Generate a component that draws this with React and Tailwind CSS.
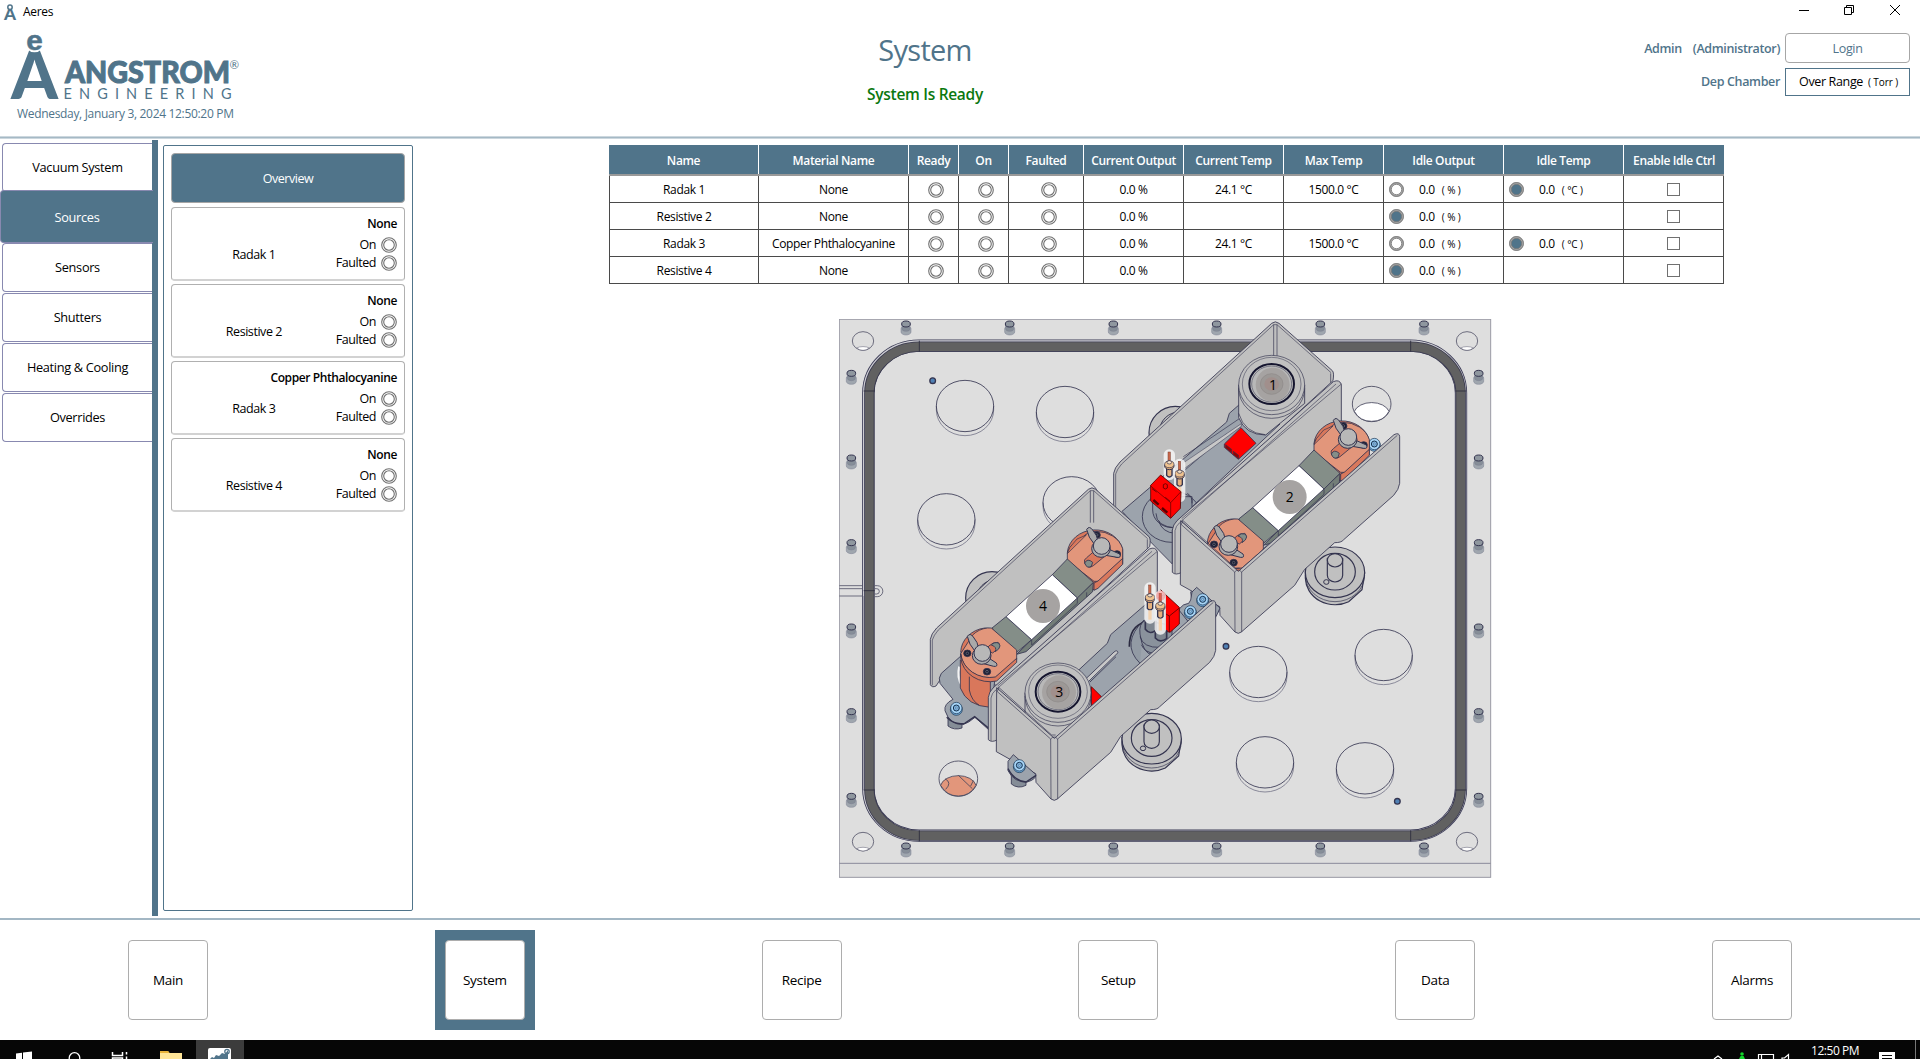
import React from "react";

const EDGE = "#34344f";
const WALL = "#c0c0c0";
const STEEL = "#9ca3ac";

/* ---------- small shared pieces ---------- */

function Lamp() {
  return (
    <svg width="16" height="16" viewBox="0 0 16 16" className="shrink-0">
      <circle cx="8" cy="8" r="7.3" fill="#fff" stroke="#707070" strokeWidth="1.1" />
      <circle cx="8" cy="8" r="5.3" fill="#fff" stroke="#707070" strokeWidth="1.1" />
    </svg>
  );
}

function Radio({ on }) {
  return (
    <svg width="15" height="15" viewBox="0 0 15 15" className="shrink-0">
      <circle cx="7.5" cy="7.5" r="6.3" fill={on ? "#50748a" : "#fff"} stroke="#a8a8a8" strokeWidth="2.2" />
      <circle cx="7.5" cy="7.5" r="6.9" fill="none" stroke="#777" strokeWidth="0.9" />
      <circle cx="7.5" cy="7.5" r="5.2" fill="none" stroke="#777" strokeWidth="0.8" />
    </svg>
  );
}

/* ---------- header ---------- */

function Logo() {
  return (
    <svg width="232" height="72" viewBox="8 32 232 72" className="block overflow-visible" fill="#50748a">
      <text x="11" y="99" fontFamily="Lato" fontWeight="900" fontSize="67" textLength="47" lengthAdjust="spacingAndGlyphs">A</text>
      <circle cx="34.5" cy="42" r="10.3" fill="#fff" />
      <text x="26.2" y="50" fontFamily="Liberation Sans" fontWeight="700" fontSize="28" textLength="16.5" lengthAdjust="spacingAndGlyphs" stroke="#50748a" strokeWidth="0.5">e</text>
      <text x="65" y="82.5" fontFamily="Lato" fontWeight="900" fontSize="29.5" textLength="165" lengthAdjust="spacingAndGlyphs" stroke="#50748a" strokeWidth="1">ANGSTROM</text>
      <text x="229.5" y="69" fontFamily="Lato" fontSize="11.5">®</text>
      <text x="63.5" y="98.8" fontFamily="Lato" fontWeight="400" fontSize="14.5" textLength="168">ENGINEERING</text>
    </svg>
  );
}

function TitleBar() {
  return (
    <div className="flex h-[24px] items-center pl-[4px] pr-[19px]">
      <svg width="12" height="17" viewBox="0 0 12 17" fill="#50748a" className="overflow-visible">
        <text x="0" y="16" fontFamily="Lato" fontWeight="900" fontSize="17" textLength="12" lengthAdjust="spacingAndGlyphs">A</text>
        <circle cx="6" cy="3.2" r="2.2" fill="#fff" stroke="#50748a" strokeWidth="1.5" />
      </svg>
      <span className="ml-[7px] text-[12px] leading-none tracking-[-0.3px]">Aeres</span>
      <svg width="102" height="12" viewBox="0 0 102 12" className="ml-auto mb-[4px]" fill="none" stroke="#000" strokeWidth="1">
        <path d="M0 6.5H10" />
        <path d="M45.5 3.5h7v7h-7zM47.5 3.5v-2h7v7h-2" />
        <path d="M91 1l10 10M101 1L91 11" />
      </svg>
    </div>
  );
}

function Header() {
  return (
    <div className="grid h-[112px] grid-cols-3 text-[#50748a]">
      <div className="pl-[8px] pt-[8px]">
        <Logo />
        <div className="pl-[9px] pt-[2px] text-[12px] leading-[16px] tracking-[-0.32px] whitespace-nowrap">
          Wednesday, January 3, 2024 12:50:20 PM
        </div>
      </div>
      <div className="-ml-[70px] flex flex-col items-center pt-[8px]">
        <div className="text-[29px] leading-[36px] tracking-[-0.7px]">System</div>
        <div className="mt-[17px] text-[15.5px] font-semibold leading-[18px] tracking-[-0.3px] text-[#0b780f]">System Is Ready</div>
      </div>
      <div className="flex flex-col items-end gap-[5px] pr-[10px] pt-[9px] text-[12.5px] tracking-[-0.35px]">
        <div className="flex items-center gap-[5px]">
          <span className="mr-[6px] pt-[2px] font-semibold">Admin</span>
          <span className="pt-[2px] font-semibold">(Administrator)</span>
          <div className="flex h-[30px] w-[125px] items-center justify-center rounded-[4px] border border-[#a6a6a6] pt-[2px]">Login</div>
        </div>
        <div className="flex items-center gap-[5px]">
          <span className="pt-[1px] font-semibold">Dep Chamber</span>
          <div className="flex h-[28px] w-[125px] items-center justify-end gap-[5px] border border-[#50748a] pr-[11px] pt-[1px] text-black">
            <span>Over Range</span>
            <span className="text-[10px] tracking-[-0.1px]">( Torr )</span>
          </div>
        </div>
      </div>
    </div>
  );
}

/* ---------- left navigation ---------- */

function Tab({ label, active }) {
  if (active) {
    return (
      <div className="z-10 -mb-[1px] -mt-[2px] flex h-[53px] w-[153px] items-center justify-center rounded-l-[4px] border border-r-0 border-[#8889b0] bg-[#50748a] pt-[2px] text-white">
        {label}
      </div>
    );
  }
  return (
    <div className="ml-[2px] mt-[0.5px] flex h-[49.5px] w-[150px] items-center justify-center rounded-l-[4px] border border-r-0 border-[#8889b0] pt-[1px]">
      {label}
    </div>
  );
}

function SideTabs() {
  return (
    <div className="mt-[1px] flex h-[776px] w-[158px] border-r-[6px] border-[#50748a] text-[12.75px] tracking-[-0.32px]">
      <div className="flex w-[152px] flex-col pt-[2px]">
        <Tab label="Vacuum System" />
        <Tab label="Sources" active />
        <Tab label="Sensors" />
        <Tab label="Shutters" />
        <Tab label="Heating & Cooling" />
        <Tab label="Overrides" />
      </div>
    </div>
  );
}

const SOURCES = [
  { name: "Radak 1", material: "None", temp: true },
  { name: "Resistive 2", material: "None", temp: false },
  { name: "Radak 3", material: "Copper Phthalocyanine", temp: true },
  { name: "Resistive 4", material: "None", temp: false },
];

function SourceCard({ source }) {
  return (
    <div className="flex h-[74px] flex-col items-end rounded-[4px] border border-b-2 border-[#b0b0b0] border-b-[#d2d2d2] pr-[7px] pt-[6px]">
      <div className="text-[12px] font-semibold leading-[20px] tracking-[-0.4px] text-black">{source.material}</div>
      <div className="flex w-full items-center">
        <div className="w-[164px] pt-[5px] text-center">{source.name}</div>
        <div className="ml-auto flex flex-col items-end pt-[2px]">
          <div className="flex h-[18px] items-center gap-[5px]">On<Lamp /></div>
          <div className="flex h-[18px] items-center gap-[5px]">Faulted<Lamp /></div>
        </div>
      </div>
    </div>
  );
}

function SourcePanel() {
  return (
    <div className="ml-[5px] mt-[6px] flex h-[766px] w-[250px] flex-col gap-[3px] rounded-[2px] border border-[#50748a] px-[7px] pt-[7px] text-[12.5px] tracking-[-0.45px]">
      <div className="mb-[1px] flex h-[50px] items-center justify-center rounded-[4px] border border-[#a6a6a6] bg-[#50748a] pt-[2px] text-white">Overview</div>
      {SOURCES.map((s) => (
        <SourceCard key={s.name} source={s} />
      ))}
    </div>
  );
}

/* ---------- status table ---------- */

const GRID = "grid grid-cols-[150px_150px_50px_50px_75px_100px_100px_100px_120px_120px_100px]";
const COLS = ["Name", "Material Name", "Ready", "On", "Faulted", "Current Output", "Current Temp", "Max Temp", "Idle Output", "Idle Temp", "Enable Idle Ctrl"];

function Cell({ children }) {
  return <div className="flex items-center justify-center border-b border-r border-[#4a4a4a] pt-[1px] first:border-l">{children}</div>;
}

function LampCell() {
  return (
    <div className="flex items-center justify-center border-b border-r border-[#4a4a4a] pl-[5px] pt-[1px]">
      <Lamp />
    </div>
  );
}

function IdleCell({ on, unit }) {
  return (
    <div className="flex items-center border-b border-r border-[#4a4a4a] pl-[5px] pt-[1px]">
      <Radio on={on} />
      <span className="ml-[15px]">0.0</span>
      <span className="ml-[7px] pt-[1px] text-[10px] tracking-[-0.1px]">{unit}</span>
    </div>
  );
}

function StatusTable() {
  return (
    <div className="w-[1115px] text-[12px] tracking-[-0.35px]">
      <div className={GRID + " h-[31px] border-b-2 border-[#999] bg-[#50748a] font-semibold text-white"}>
        {COLS.map((c) => (
          <div key={c} className="flex items-center justify-center whitespace-nowrap border-r border-white pt-[2px] last:border-r-0">{c}</div>
        ))}
      </div>
      {SOURCES.map((s) => (
        <div key={s.name} className={GRID + " h-[27px]"}>
          <Cell>{s.name}</Cell>
          <Cell>{s.material}</Cell>
          <LampCell />
          <LampCell />
          <LampCell />
          <Cell>0.0 %</Cell>
          <Cell>{s.temp ? "24.1 °C" : ""}</Cell>
          <Cell>{s.temp ? "1500.0 °C" : ""}</Cell>
          <IdleCell on={!s.temp} unit="( % )" />
          {s.temp ? <IdleCell on unit="( °C )" /> : <Cell />}
          <Cell><div className="h-[13px] w-[13px] border border-[#707070]" /></Cell>
        </div>
      ))}
    </div>
  );
}

/* ---------- chamber drawing (3 units per pixel) ---------- */

const at = (x, y) => `translate(${x} ${y})`;

function Pin({ x, y }) {
  return (
    <g transform={at(x, y)} stroke="#7b7f90" strokeWidth="1.5">
      <path d="M-15 24v10a15 9 0 0 0 30 0v-10a15 9 0 0 0 -30 0z" fill="#9fa6ae" />
      <path d="M-12 10v14a12 8 0 0 0 24 0v-14z" fill="#868e98" />
      <ellipse cx="0" cy="10" rx="13" ry="9" fill="#8f979f" stroke={EDGE} strokeWidth="3" />
    </g>
  );
}

function CornerHole({ x, y }) {
  return (
    <g transform={at(x, y)} stroke="#55556a" strokeWidth="2.5">
      <ellipse cx="0" cy="0" rx="32" ry="28" fill="#dedede" />
      <path d="M-19 21a25 12 0 0 1 38 0q-19 14-38 0z" fill="#fff" strokeWidth="1.5" />
    </g>
  );
}

function Port({ x, y }) {
  return (
    <g transform={at(x, y)} fill="none">
      <path d="M-86 0v12a86 77 0 0 0 172 0v-12" stroke="#77778a" strokeWidth="2.5" />
      <ellipse rx="86" ry="77" stroke={EDGE} strokeWidth="2.5" />
    </g>
  );
}

function Dot({ x, y }) {
  return <circle cx={x} cy={y} r="8.5" fill="#4f80b4" stroke={EDGE} strokeWidth="4" />;
}

function Knob({ x, y }) {
  return (
    <g transform={at(x, y)} stroke={EDGE} strokeWidth="3.5" fill={WALL}>
      <path d="M-89 -8v22a89 82 0 0 0 130 70l40-36 8-50z" />
      <ellipse cx="0" cy="-4" rx="89" ry="76" />
      <path d="M-89 4a89 80 0 0 0 178 0" fill="none" strokeWidth="2" />
      <ellipse cx="0" cy="-6" rx="61" ry="55" />
      <path d="M-23 -45v50a23 20 0 0 0 46 0v-50z" />
      <ellipse cx="0" cy="-40" rx="23" ry="20" />
      <ellipse cx="-26" cy="25" rx="8" ry="7" strokeWidth="3" />
    </g>
  );
}

function Screw({ x, y }) {
  return (
    <g transform={at(x, y)} stroke="#16324f">
      <ellipse cx="0" cy="4" rx="18" ry="18" fill="#6fa8d6" strokeWidth="2" />
      <circle r="17" fill="#a6d4f6" strokeWidth="2" />
      <circle r="9" fill="#7fb4e0" strokeWidth="3" />
      <circle r="3" fill="#a6d4f6" strokeWidth="1" />
    </g>
  );
}

function BlackScrew({ x, y }) {
  return (
    <g transform={at(x, y)}>
      <ellipse rx="11" ry="10" fill="#1d1f33" />
      <circle r="4" fill="none" stroke="#6d7080" strokeWidth="2" />
    </g>
  );
}

function WingNut({ x, y, foot }) {
  return (
    <g transform={at(x, y)} stroke={EDGE} strokeWidth="3" fill="#a9a9a9">
      <path d="M-45 -52q8-12 18 2q14 16 16 34l-10 10q-20-22-24-46z" />
      <path d={foot ? "M14 10l28 18q6 12-8 10l-30-8z" : "M18 6l36 16q6 12-8 10l-34-6z"} />
      <ellipse cx="-2" cy="6" rx="28" ry="26" />
      <circle cx="0" cy="-2" r="25" fill="#b8b8b8" />
    </g>
  );
}

/* resistive boat: two copper clamps with a heater strip between them */
function Boat({ n }) {
  return (
    <g stroke={EDGE} strokeWidth="2.5" strokeLinejoin="round">
      {/* upper clamp */}
      <path d="M642 400a84 74 0 0 1 166 -8v42l-75 72-30 14z" fill="#d9785c" />
      <path d="M642 404q4-22 22-28l34-30q14-10 30-9a82 70 0 0 1 80 52v30l-72 68h-14l-80-62z" fill="#e2967b" />
      <path d="M642 404l57-56-28 12-22 26z" fill="#d9785c" strokeWidth="2" />
      <path d="M722 492v22l12-6 74-72v-18l-74 68z" fill="#d9785c" />
      <path d="M694 432q-4-10 6-16l28-24 26 20-34 28q-16 12-26-8z" fill="#d9785c" />
      <path d="M694 432q8-16 24-2l-4 12q-14 8-20-10z" fill="#848e88" />
      <BlackScrew x={730} y={348} />
      <BlackScrew x={791} y={405} />
      <WingNut x={745} y={383} />
      {/* strip */}
      <path d="M720 490l-2 28-200 180-28 8 45-44z" fill="#737d78" />
      <path d="M642 420l78 70-48 47-75-70z" fill="#848e88" />
      <path d="M458 593l77 69-47 40-73-74z" fill="#848e88" />
      <path d="M597 467l75 70-137 125-77-69z" fill="#fff" />
      <path d="M672 537v16l-137 125v-16M700 520v14" fill="none" strokeWidth="2" />
      {/* lower clamp */}
      <path d="M322 700a84 76 0 0 1 72-73l24 2v60z" fill="#d9785c" />
      <path d="M322 704l36-56q18-18 44-21h12l76 66v28l-64 54a88 80 0 0 1-104-71z" fill="#e2967b" />
      <path d="M322 704v12a88 80 0 0 0 108 70l60-56v-12l-64 56a88 80 0 0 1-104-70z" fill="#d9785c" />
      <path d="M398 692q6-12 22-20l14-2q10 10-2 20l-14 12z" fill="#d9785c" />
      <path d="M414 678q8-10 22-6 8 8 0 18l-10 8q6-14-12-20z" fill="#848e88" />
      <BlackScrew x={342} y={703} />
      <BlackScrew x={401} y={758} />
      <WingNut x={387} y={704} foot />
      <circle cx="569" cy="561" r="51" fill="#a6a3a2" stroke="none" />
      <text x="569" y="576" textAnchor="middle" fontSize="42" fill="#000" stroke="none">{n}</text>
    </g>
  );
}

/* radak furnace seen from above */
function Furnace({ n }) {
  return (
    <g stroke={EDGE} strokeWidth="2.5">
      <path d="M416 225v98q20 52 81 52l117-95v-55z" fill={WALL} />
      <path d="M416 235a99 90 0 0 0 198 0M416 310q18 60 80 64" fill="none" strokeWidth="2" />
      <ellipse cx="515" cy="225" rx="99" ry="89" fill={WALL} strokeWidth="2" />
      <ellipse cx="515" cy="222" rx="88" ry="80" fill={WALL} strokeWidth="1.5" />
      <ellipse cx="515" cy="222" rx="67" ry="60" fill="#bcbcbc" stroke="#15152f" strokeWidth="6" />
      <ellipse cx="515" cy="222" rx="60" ry="54" fill="#b8b8b8" strokeWidth="1.5" />
      <circle cx="518" cy="224" r="51" fill="#a6a3a2" stroke="none" />
      <ellipse cx="515" cy="222" rx="34" ry="31" fill="#9c9896" stroke="#8e8a88" strokeWidth="2" />
      <ellipse cx="515" cy="222" rx="22" ry="20" fill="#a18f8c" stroke="none" />
      <text x="519" y="239" textAnchor="middle" fontSize="42" fill="#000" stroke="none">{n}</text>
    </g>
  );
}

function Tube({ x, y, len }) {
  return (
    <g transform={at(x, y)}>
      <rect x="-17" y="0" width="34" height={len} rx="16" fill="#f4f4f4" opacity="0.85" />
      <rect x="-4" y="8" width="7" height="26" fill="#c9684c" stroke="#7b3c2c" strokeWidth="1.5" />
      <path d="M-8 56v22q8 10 16 0v-22z" fill="#e7b27e" stroke={EDGE} strokeWidth="4" />
      <ellipse cx="0" cy="50" rx="14" ry="11" fill="#dca877" stroke={EDGE} strokeWidth="3" />
      <ellipse cx="0" cy="45" rx="14" ry="10" fill="#efc390" stroke={EDGE} strokeWidth="2" />
      <ellipse cx="0" cy="39" rx="7" ry="5" fill="#f6e2c8" stroke={EDGE} strokeWidth="2" />
      <rect x="-5" y="84" width="10" height={Math.max(0, len - 96)} fill="#f3d3b0" />
    </g>
  );
}

function BackWall() {
  return (
    <g stroke={EDGE} strokeWidth="2.5" fill={WALL}>
      <path d="M41 626V490q2-16 19-34L515 40q11-9 22 0l160 142q6 6 2 30L245 628l-175-16-12 18q-12 6-17-4z" />
      <path d="M47 628V492q4-14 18-30L521 44l10 0 162 144" fill="none" strokeWidth="1.8" />
      <path d="M521 44v96M531 44v96M692 190v28" fill="none" strokeWidth="2" />
    </g>
  );
}

function MidWall() {
  return (
    <g stroke={EDGE} strokeWidth="2.5" fill={WALL}>
      <path d="M245 635v152q-18 10-28 0V660q2-16 14-28L700 215q18-8 24 8v280L415 785z" />
      <path d="M225 790V662q2-14 14-24L708 222" fill="none" strokeWidth="1.8" />
      <path d="M245 626L724 222" fill="none" strokeWidth="1.8" />
    </g>
  );
}

function FrontWall() {
  return (
    <g stroke={EDGE} strokeWidth="2.5" fill={WALL} strokeLinejoin="round">
      <path d="M242 632l173 152L882 374q16-8 17 6v140q-2 18-18 36L730 690q-6 8-26 8l-90 80-30 48L424 966q-9 8-19 0l-45-50-1-26-118-66z" />
      <path d="M248 632l-4 12 160 142 1 180M425 786v180M404 786q10-12 21 0L892 376M247 630l160 144h12" fill="none" strokeWidth="2" />
    </g>
  );
}

function Chamber() {
  const top = [228, 539, 850, 1160, 1471, 1782];
  const side = [180, 434, 688, 941, 1195, 1449];
  return (
    <svg width="653" height="561" viewBox="27 27 1959 1683" className="block" fontFamily="'Open Sans', sans-serif">
      <rect x="28" y="28" width="1954" height="1674" fill="#dedede" stroke="#9a9aa4" strokeWidth="3" />
      <path d="M28 1660H1982" stroke="#8a8a9a" strokeWidth="3" />

      {/* gasket groove */}
      <rect x="115" y="107" width="1778" height="1470" rx="152" ry="142" fill="none" stroke="#3a3a55" strokeWidth="37" />
      <rect x="115" y="107" width="1778" height="1470" rx="152" ry="142" fill="none" stroke="#cdcdd2" strokeWidth="32" />
      <rect x="118" y="110" width="1774" height="1467" rx="150" ry="140" fill="none" stroke="#3a3a50" strokeWidth="31" />
      <rect x="118" y="110" width="1774" height="1467" rx="150" ry="140" fill="none" stroke="#616161" strokeWidth="26" />
      <path d="M268 92v33M1742 92v33M268 1561v33M1742 1561v33M101 243h33M1876 243h33M101 1440h33M1876 1440h33M101 842h33" stroke="#2b2b3c" strokeWidth="2.5" />
      <path d="M28 827h71M28 836h71M28 858h71M134 827h8a16 16 0 0 1 0 33h-8M134 836h6a8 8 0 0 1 0 16h-6" fill="none" stroke="#55556a" strokeWidth="2.5" />
      <path d="M99 858V1440" stroke="#55556a" strokeWidth="2" />

      {top.map((x) => <Pin key={"t" + x} x={x} y={32} />)}
      {top.map((x) => <Pin key={"b" + x} x={x} y={1598} />)}
      {side.map((y) => <Pin key={"l" + y} x={64} y={y} />)}
      {side.map((y) => <Pin key={"r" + y} x={1946} y={y} />)}
      <CornerHole x={99} y={93} />
      <CornerHole x={1911} y={93} />
      <CornerHole x={99} y={1595} />
      <CornerHole x={1911} y={1595} />

      <Port x={405} y={288} />
      <Port x={705} y={306} />
      <Port x={349} y={628} />
      <Port x={725} y={577} />
      <Port x={1285} y={1086} />
      <Port x={1661} y={1035} />
      <Port x={1305} y={1357} />
      <Port x={1605} y={1375} />
      <Dot x={308} y={212} />
      <Dot x={1188} y={1009} />
      <Dot x={1702} y={1474} />

      {/* viewing holes */}
      <g stroke="#44445c" strokeWidth="2.5">
        <ellipse cx="1625" cy="282" rx="58" ry="53" fill="#dedede" />
        <path d="M1573 304a54 36 0 0 1 104 0q-16 30-52 30t-52-30z" fill="#fff" />
        <ellipse cx="385" cy="1406" rx="58" ry="53" fill="#dedede" />
        <path d="M332 1426a54 36 0 0 1 106 0q-18 32-53 32t-53-32z" fill="#e2967b" />
        <path d="M345 1406q22 12 2 32M385 1396l42 40M430 1412l-8 16" fill="none" />
      </g>

      {/* rotary feedthroughs */}
      <g stroke={EDGE} strokeWidth="3.5" fill={WALL}>
        <circle cx="1036" cy="368" r="79" />
        <circle cx="1048" cy="366" r="60" fill="none" strokeWidth="3" />
        <circle cx="486" cy="864" r="79" />
        <circle cx="500" cy="870" r="62" fill="none" strokeWidth="3" />
      </g>
      <Knob x={1515} y={791} />
      <Knob x={965} y={1290} />

      {/* upper pair */}
      <g transform={at(810, 0)}>
        <BackWall />
        <g stroke={EDGE} strokeWidth="2.5">
          <path d="M66 604L380 336l8-26 32-28 120 60-295 278-28 40v102L150 694z" fill={STEEL} />
          <path d="M250 440L418 326M252 462L424 348M232 500L380 372" fill="none" strokeWidth="2" />
          <path d="M248 460L424 341v8L250 478z" fill="#c8c8c8" strokeWidth="1.5" />
          <path d="M373 402l50-49 45 47-53 48-42-36z" fill="#f00" />
          <path d="M377 404l18 14v10l-18-14zM400 424l16 12v10l-16-12z" fill="#900" strokeWidth="2" />
          <ellipse cx="215" cy="620" rx="88" ry="77" fill="none" />
          <path d="M158 560v40a58 52 0 0 0 118 0v-40z" fill="#929aa4" />
          <path d="M168 610q0 40 60 44M176 632q10 36 50 38M262 550q16 10 14 30" fill="none" />
        </g>
        <Furnace n="1" />
        <Tube x={239} y={446} len={130} />
        <Tube x={208} y={418} len={92} />
        <g stroke="#5a0000" strokeWidth="2.5">
          <path d="M152 526l30-31 61 50-2 50-29 30-60-52z" fill="#f00" />
          <path d="M152 528l60 50 30-32M212 578v46" fill="none" strokeWidth="2" />
          <path d="M190 524q6-6 12 0v10q-6 6-12 0zM156 536l14 10M196 562l14 12" fill="none" strokeWidth="2.5" />
          <path d="M160 570l16 14M186 594l16 14" fill="none" strokeWidth="7" />
        </g>
        <MidWall />
        <Screw x={823} y={402} />
        <Boat n="2" />
        <path d="M272 846l20-20 64 60v20l-80-30z" fill={STEEL} stroke={EDGE} strokeWidth="2.5" />
        <FrontWall />
      </g>

      {/* lower pair */}
      <g transform={at(260, 498)}>
        <BackWall />
      </g>
      <g transform={at(270, 480)}>
        <g stroke={EDGE} strokeWidth="2.5">
          <path d="M84 730v38q18 14 42 6v-26z" fill="#858d97" />
          <path d="M60 640q-6-16 4-30l70-62h100l-27 232-42-38q-18 16-36 22-40 0-54-42-4-20 24-34z" fill={STEEL} />
          <path d="M80 742q24 24 54 18l30-20 44 36" fill="none" strokeWidth="4" />
          <path d="M118 590q-8 30 8 58l-2 8" fill="none" stroke="#f4f4f4" strokeWidth="7" />
          <path d="M121 570v84q20 54 90 58V600z" fill="#d9775b" />
          <path d="M148 620v40q6 32 30 46" fill="none" />
        </g>
        <Screw x={109} y={714} />
      </g>
      <g transform={at(70, 327)}>
        <Boat n="4" />
      </g>
      <g transform={at(258, 502)}>
        <MidWall />
      </g>
      <g transform={at(270, 480)}>
        <path d="M812 390l4-24 14-14 70 62-12 26-46 34-72-20q0-50 36-54z" fill={STEEL} stroke={EDGE} strokeWidth="2.5" />
        <g stroke={EDGE} strokeWidth="2.5">
          <path d="M472 604l90-84 10-26 104-90 56-30 40 40 40 50-300 250-60-70z" fill={STEEL} />
          <path d="M500 624l82-78q10-8 12 2l-90 88M510 636l78-76" fill="#c8c8c8" strokeWidth="2.5" />
          <path d="M660 580q-60-60 12-130" fill="#929aa4" />
          <path d="M628 530q0-60 46-74" fill="none" strokeWidth="5" stroke="#2a2a40" />
          <path d="M674 452q-18 10-14 40 8 60 40 64l56-50v-40z" fill="#8a929c" />
          <path d="M660 500q10 34 60 32M664 524q10 24 40 26" fill="none" />
          <path d="M514 650l32 32-32 28z" fill="#f00" stroke="#5a0000" />
          <path d="M722 360l56 52v50l-28 25-14-4V372z" fill="#f00" stroke="#5a0000" />
          <path d="M778 414l-30 24v48M748 438l-10-6" fill="none" stroke="#5a0000" />
          <path d="M676 450v28q14 18 32 2v-28M706 480v24q14 16 34 2v-26" fill="#7e8690" strokeWidth="5" />
        </g>
        <Tube x={690} y={337} len={124} />
        <Tube x={721} y={362} len={132} />
        <ellipse cx="722" cy="377" rx="14" ry="15" fill="#ff5050" opacity="0.35" />
        <Screw x={848} y={388} />
        <Screw x={811} y={424} />
      </g>
      <g transform={at(169, 923)}>
        <Furnace n="3" />
      </g>
      <g transform={at(258, 501)}>
        <FrontWall />
      </g>
      <g transform={at(270, 480)} stroke={EDGE} strokeWidth="2.5">
        <path d="M274 906v36q20 16 44 4v-34z" fill="#858d97" />
        <path d="M264 874l16-20 68 60q0 14-26 22-40 2-58-34z" fill={STEEL} />
        <path d="M264 896q18 36 54 40l30-20" fill="none" strokeWidth="4" />
        <Screw x={298} y={886} />
      </g>
    </svg>
  );
}

/* ---------- bottom navigation and taskbar ---------- */

function NavButton({ label, active }) {
  const box = <div className="flex h-[80px] w-[80px] items-center justify-center rounded-[4px] border border-[#adadad] bg-white pt-[1px]">{label}</div>;
  return active ? <div className="-mx-[10px] bg-[#50748a] p-[10px]">{box}</div> : box;
}

function Taskbar() {
  return (
    <div className="flex h-[19px] items-start overflow-hidden bg-[#060606]">
      <svg width="190" height="19" viewBox="0 0 190 19" className="shrink-0">
        <path d="M16 13.5l6-.8V19h-6zM23 12.6l9-1.2V19h-9z" fill="#fff" />
        <circle cx="74.5" cy="18" r="5.3" fill="none" stroke="#fff" strokeWidth="1.3" />
        <path d="M112.5 12v3.5h10V12M112.5 19v-1h10v1M126.5 12v2.5M126.5 16.5V19" fill="none" stroke="#fff" strokeWidth="1.5" />
        <path d="M160 11h8l1.5 2H182v6h-22z" fill="#ffe597" />
        <path d="M160 11h8l1.5 2H160z" fill="#e8b339" />
      </svg>
      <svg width="48" height="19" viewBox="0 0 48 19" className="ml-[6px] shrink-0 bg-[#3c3c3c]">
        <rect x="12" y="8" width="23" height="14" rx="2" fill="#fff" />
        <path d="M14 19l2-2 2 1 2-3 3 1 3-3 3 1 3-4v9z" fill="#50748a" />
        <circle cx="31" cy="11.5" r="2.2" fill="none" stroke="#50748a" strokeWidth="1.3" />
      </svg>
      <svg width="80" height="19" viewBox="0 0 80 19" className="ml-auto shrink-0">
        <path d="M3 19l4-3 4 3" fill="none" stroke="#fff" strokeWidth="1.3" />
        <path d="M28 19l1.6-3h3l1.4 3z" fill="#12d62b" />
        <circle cx="31" cy="14" r="1.8" fill="#12d62b" />
        <path d="M47.5 19v-4.5h15V19M50.5 14.5V19" fill="none" stroke="#fff" strokeWidth="1.2" />
        <path d="M71 19v-1h2.500l4-3.500V19" fill="none" stroke="#fff" strokeWidth="1.2" />
      </svg>
      <span className="ml-[20px] mt-[3px] w-[50px] whitespace-nowrap text-[12px] leading-[16px] tracking-[-0.45px] text-white">12:50 PM</span>
      <svg width="59" height="19" viewBox="0 0 59 19" className="shrink-0">
        <path d="M18 12h16v7H18z" fill="#fff" />
        <path d="M21 15.500h10M21 18.500h10" stroke="#060606" strokeWidth="1.200" />
        <path d="M54.500 0v19" stroke="#777" />
      </svg>
    </div>
  );
}

export default function App() {
  return (
    <div className="flex h-[1059px] w-[1920px] flex-col overflow-hidden bg-white font-['Open_Sans',sans-serif] text-black">
      <TitleBar />
      <Header />
      <div className="h-[3px] shrink-0 border-y border-[#ccd7de] bg-[#a5b9c5]" />
      <div className="flex h-[779px] shrink-0">
        <SideTabs />
        <SourcePanel />
        <div className="ml-[196px] flex flex-col pt-[6px]">
          <StatusTable />
          <div className="ml-[230px] mt-[35px]">
            <Chamber />
          </div>
        </div>
      </div>
      <div className="h-[2px] shrink-0 bg-[#a3b7c4]" />
      <div className="flex h-[120px] shrink-0 items-center justify-between px-[128px] text-[13.5px] tracking-[-0.3px]">
        <NavButton label="Main" />
        <NavButton label="System" active />
        <NavButton label="Recipe" />
        <NavButton label="Setup" />
        <NavButton label="Data" />
        <NavButton label="Alarms" />
      </div>
      <Taskbar />
    </div>
  );
}
